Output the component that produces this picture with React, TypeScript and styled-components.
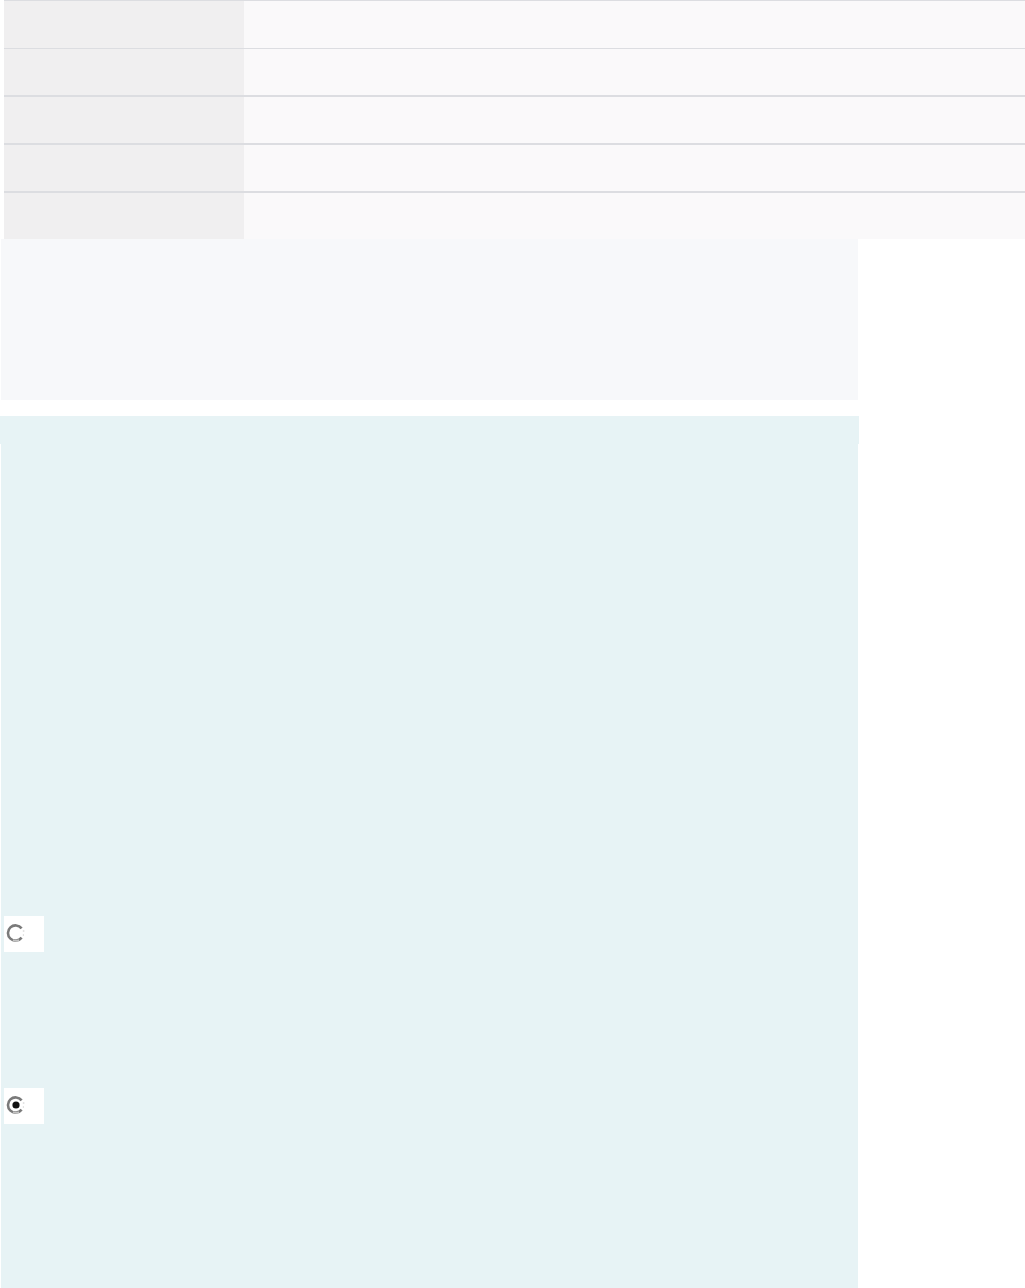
import React from 'react';
import styled, { createGlobalStyle } from 'styled-components';

const GlobalStyle = createGlobalStyle`
  html, body {
    margin: 0;
    padding: 0;
    background: #ffffff;
    font-family: "Liberation Sans", Arial, sans-serif;
    overflow: hidden;
  }
`;

const Page = styled.div`
  width: 1025px;
  height: 1288px;
  overflow: hidden;
`;

const Table = styled.div`
  margin-left: 4px;
  width: 1021px;
  display: flex;
  flex-direction: column;
`;

const Row = styled.div<{ $border: number; $height: number }>`
  display: grid;
  grid-template-columns: 240px 1fr;
  height: ${(p) => p.$height}px;
  box-sizing: border-box;
  border-top: ${(p) => p.$border}px solid #dcdde1;
`;

const LabelCell = styled.div`
  background: #f0eff0;
`;

const ValueCell = styled.div`
  background: #faf9fa;
`;

const InfoBox = styled.div`
  margin-left: 1px;
  width: 857px;
  height: 161px;
  background: #f7f8fa;
`;

const Panel = styled.div`
  margin-top: 16px;
  width: 859px;
  display: flex;
  flex-direction: column;
`;

const PanelHeader = styled.div`
  height: 28px;
  background: #e7f3f5;
`;

const PanelBody = styled.div`
  margin-left: 1px;
  width: 857px;
  height: 844px;
  background: #e7f3f5;
  padding: 472px 0 0 3px;
  box-sizing: border-box;
  display: flex;
  flex-direction: column;
  gap: 136px;
`;

const RadioCell = styled.label`
  width: 40px;
  height: 36px;
  background: #ffffff;
  display: flex;
  align-items: flex-start;
  padding: 7px 0 0 2px;
  box-sizing: border-box;
`;

// blurry, down-scaled native radio as in the capture
const Radio: React.FC<{ checked?: boolean }> = ({ checked }) => (
  <svg width="20" height="20" viewBox="0 0 20 20">
    <path
      d="M15.6 5.4 A7.6 7.6 0 1 0 15.6 14.6"
      fill="none"
      stroke="#7a7a7a"
      strokeWidth="2.6"
    />
    <path d="M7 17.2 A7.6 7.6 0 0 0 13 17.2" fill="none" stroke="#c4c4c4" strokeWidth="2" />
    <path d="M16.8 8 L18.4 8 M16.8 12 L18 12" stroke="#c8c8c8" strokeWidth="1" />
    {checked && <circle cx="10" cy="10" r="3.6" fill="#111111" />}
  </svg>
);

const rows = [
  { border: 1, height: 48 },
  { border: 1, height: 47 },
  { border: 2, height: 48 },
  { border: 2, height: 48 },
  { border: 2, height: 48 },
];

export default function App() {
  return (
    <Page>
      <GlobalStyle />
      <Table>
        {rows.map((r, i) => (
          <Row key={i} $border={r.border} $height={r.height}>
            <LabelCell />
            <ValueCell />
          </Row>
        ))}
      </Table>
      <InfoBox />
      <Panel>
        <PanelHeader />
        <PanelBody>
          <RadioCell>
            <Radio />
          </RadioCell>
          <RadioCell>
            <Radio checked />
          </RadioCell>
        </PanelBody>
      </Panel>
    </Page>
  );
}
